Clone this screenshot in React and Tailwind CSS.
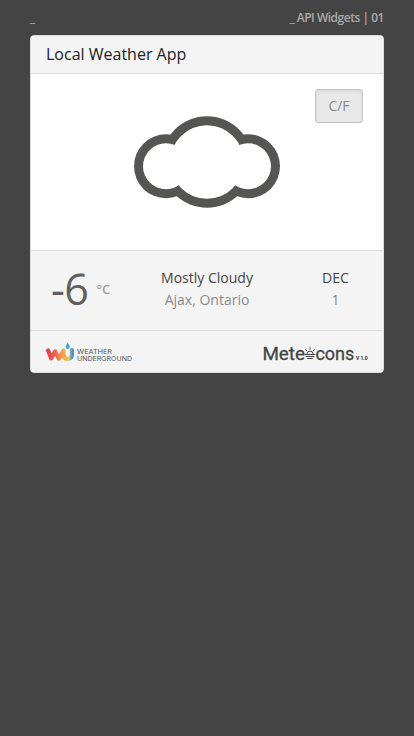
function Cloud() {
  return (
    <svg width="148" height="94" viewBox="133 115 148 94" className="block">
      <g fill="#555554">
        <circle cx="166" cy="166.3" r="32" />
        <circle cx="248" cy="166.3" r="32" />
        <circle cx="207" cy="162" r="45.7" />
      </g>
      <g fill="#ffffff">
        <circle cx="166" cy="166.3" r="23" />
        <circle cx="248" cy="166.3" r="23" />
        <circle cx="207" cy="162" r="36.7" />
      </g>
    </svg>
  );
}

function WundergroundLogo() {
  return (
    <svg width="88" height="22" viewBox="0 0 88 22" className="block">
      <defs>
        <linearGradient id="wave" gradientUnits="userSpaceOnUse" x1="0" y1="0" x2="28" y2="0">
          <stop offset="0" stopColor="#d93b53" />
          <stop offset="0.35" stopColor="#ec6a4b" />
          <stop offset="0.6" stopColor="#f4a24c" />
          <stop offset="0.82" stopColor="#f5c84f" />
          <stop offset="0.9" stopColor="#55a5cf" />
          <stop offset="1" stopColor="#2f7fc4" />
        </linearGradient>
      </defs>
      <path
        d="M2.2 8.4 L5.2 16.4 L9.2 9.4 L12.8 16.6 L17.6 8.6 V12.6 Q17.9 17 21.7 17 Q25.8 17 25.8 12.6 V8.2"
        fill="none"
        stroke="url(#wave)"
        strokeWidth="4.2"
        strokeLinecap="round"
        strokeLinejoin="round"
      />
      <path d="M21.7 .6 Q19.5 4 19.6 5 A2.1 2.1 0 0 0 23.8 5 Q23.9 4 21.7 .6Z" fill="#3fa9dc" />
      <g fontFamily="Inter, sans-serif" fontSize="6.5" fontWeight="400" fill="#505050">
        <text x="31" y="11.8" textLength="35" lengthAdjust="spacingAndGlyphs">WEATHER</text>
        <text x="31" y="18.9" textLength="55" lengthAdjust="spacingAndGlyphs">UNDERGROUND</text>
      </g>
    </svg>
  );
}

function MeteoconsLogo() {
  return (
    <svg width="106" height="22" viewBox="0 0 106 22" className="block">
      <g fontFamily="Roboto, sans-serif" fontSize="18.5" fontWeight="400" fill="#444444" stroke="#444444" strokeWidth="0.3">
        <text x="0.4" y="17.6" textLength="42.6" lengthAdjust="spacingAndGlyphs">Mete</text>
        <text x="53.4" y="17.6" textLength="39" lengthAdjust="spacingAndGlyphs">cons</text>
      </g>
      <g fill="none" stroke="#444444" strokeWidth="1">
        <path d="M42.6 12.5H53.4M44.8 12.3A3.2 3.2 0 0 1 51.2 12.3M43.6 14.5H52.4M45.2 16.5H50.8M48 5.4V7.6M43.4 7.4L45 9M52.6 7.4L51 9" />
      </g>
      <text x="94" y="17.6" fontFamily="Roboto, sans-serif" fontSize="5.6" fontWeight="900" fill="#444444" textLength="11.5" lengthAdjust="spacingAndGlyphs">V 1.0</text>
    </svg>
  );
}

export default function App() {
  return (
    <div className="h-screen overflow-hidden bg-[#444444] px-[30px] font-['Open_Sans',sans-serif]">
      <header className="flex h-[35px] justify-between pt-[9px] text-[12px] leading-[17px] font-semibold tracking-[-0.48px] text-[#aaaaaa]">
        <span>_</span>
        <span>_ API Widgets | 01</span>
      </header>
      <main className="h-[338px] overflow-hidden rounded border border-[#dddddd] bg-white">
        <h1 className="h-[38px] border-b border-[#dddddd] bg-[#f4f4f4] px-[15px] text-[16px] leading-[37px] text-[#222222]">
          Local Weather App
        </h1>
        <section className="relative flex h-[176px] justify-center pt-[41px]">
          <Cloud />
          <button className="absolute top-[15px] right-5 h-[34px] w-12 rounded-[3px] border border-[#c3c3c3] bg-[#e9e9e9] pb-[2px] text-[14px] text-[#8c8c8c] shadow-[inset_0_2px_4px_rgba(0,0,0,0.06)]">
            C/F
          </button>
        </section>
        <section className="flex h-[81px] border-y border-[#dddddd] bg-[#f4f4f4] text-center text-[14px] leading-[22px]">
          <div className="flex w-[101px] pt-2 pl-5 text-[#606060]">
            <span className="text-[43px] leading-[60px] tracking-[-0.5px]">-6</span>
            <span className="pt-[20px] pl-2 text-[13px] leading-[20px] font-semibold text-[#a0a0a0]">°C</span>
          </div>
          <div className="w-[150px] pt-4">
            <p className="text-[#444444]">Mostly Cloudy</p>
            <p className="text-[#8c8c8c]">Ajax, Ontario</p>
          </div>
          <div className="w-[101px] pt-4 pl-[6px]">
            <p className="text-[#444444]">DEC</p>
            <p className="text-[#8c8c8c]">1</p>
          </div>
        </section>
        <footer className="flex h-[42px] justify-between bg-[#f4f4f4] pt-[11px] pr-[15px] pl-[15px]">
          <WundergroundLogo />
          <MeteoconsLogo />
        </footer>
      </main>
    </div>
  );
}
